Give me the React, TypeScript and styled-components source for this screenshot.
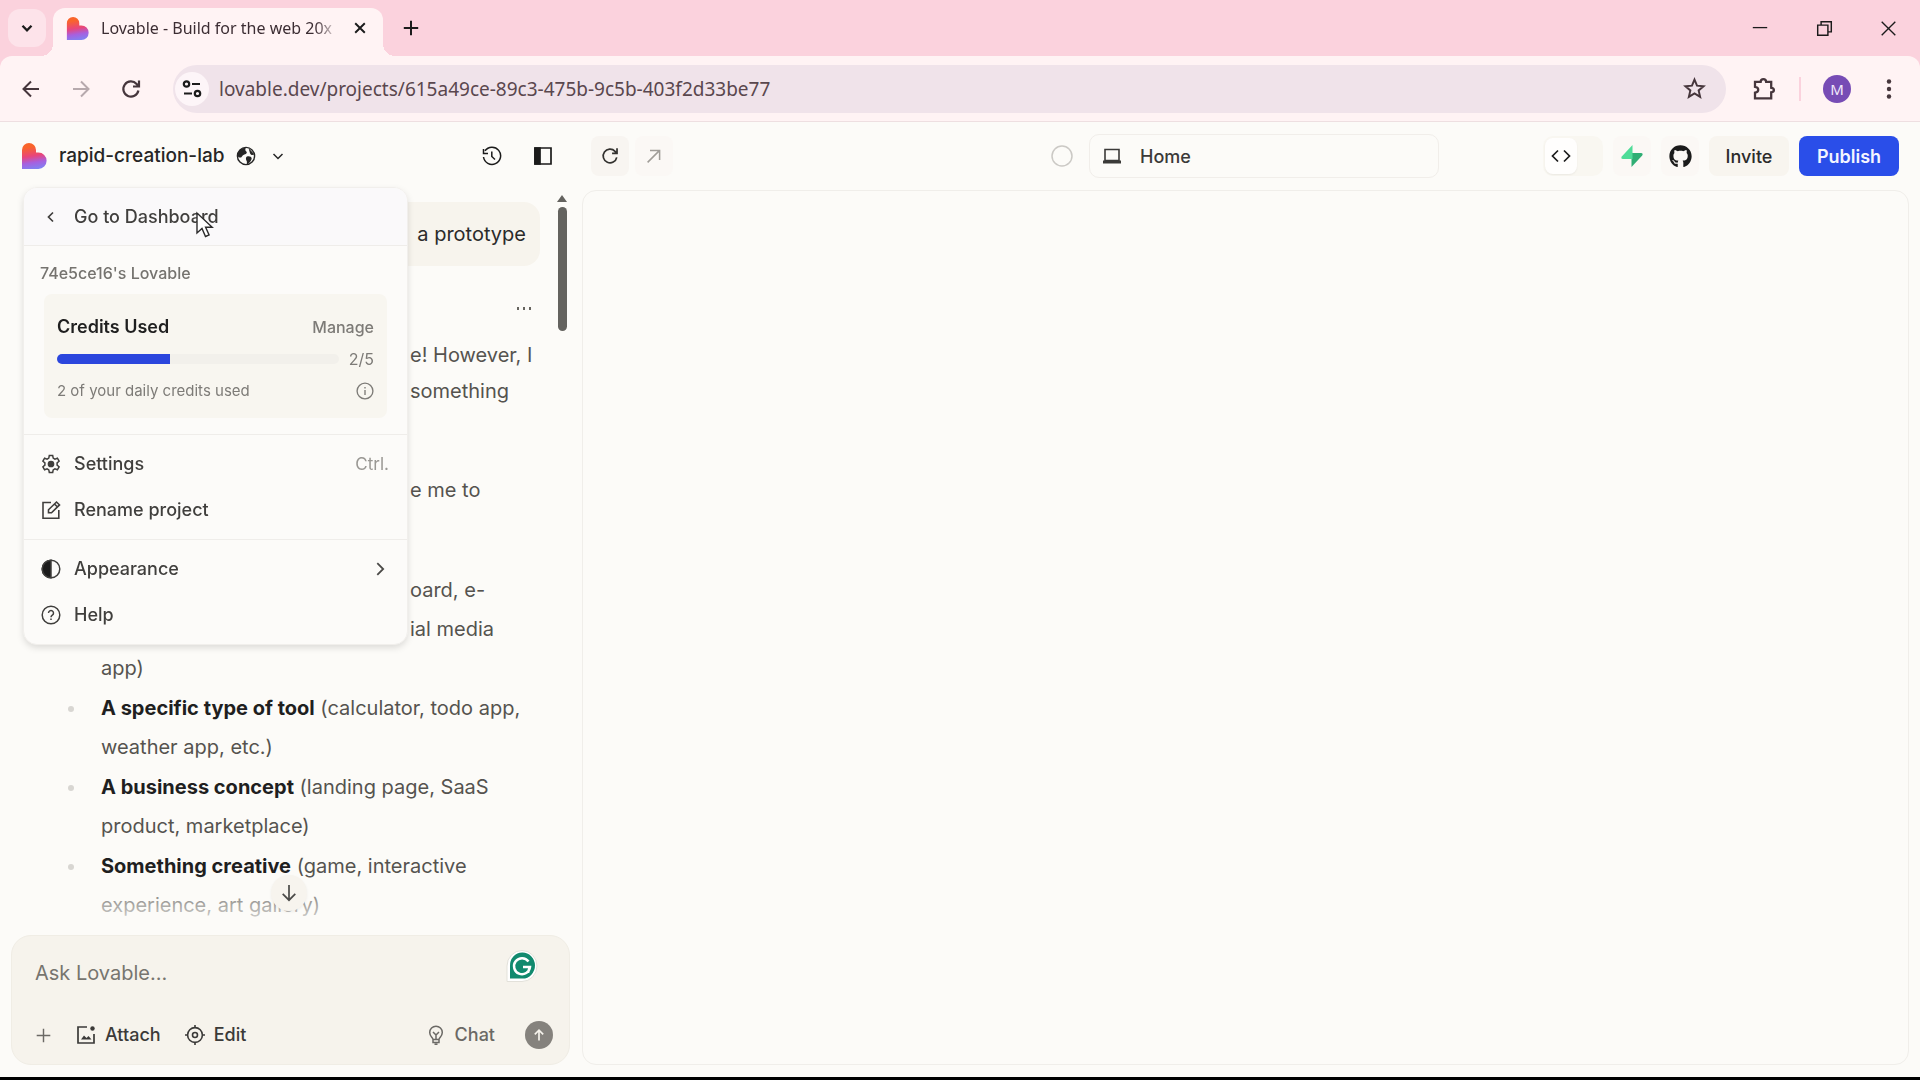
import React from "react";
import styled, { createGlobalStyle } from "styled-components";
import { FaGithub } from "react-icons/fa";

const ui = `Inter, "Liberation Sans", sans-serif`;
const chrome = `"Noto Sans", "Open Sans", sans-serif`;

const Global = createGlobalStyle`
  *, *::before, *::after { box-sizing: border-box; }
  body { margin: 0; background: #fcfbf8; }
  button, input { font: inherit; color: inherit; }
  button { border: 0; padding: 0; background: none; cursor: pointer; }
  svg { display: block; flex: none; }
  p, ul, h2 { margin: 0; padding: 0; }
`;

const Shell = styled.div`
  height: 100vh;
  display: flex;
  flex-direction: column;
  border-bottom: 3px solid #000;
  font-family: ${ui};
  color: #1b1b1b;
`;

/* Browser frame */
const TabStrip = styled.div`
  flex: none;
  height: 56px;
  display: flex;
  align-items: flex-end;
  padding-left: 8px;
  background: #fbd2dd;
  font-family: ${chrome};
`;

const TabSearch = styled.button`
  width: 38px;
  height: 38px;
  margin-bottom: 9px;
  display: grid;
  place-items: center;
  border-radius: 12px;
  background: #fde3ea;
`;

const Tab = styled.div`
  position: relative;
  width: 330px;
  height: 48px;
  margin-left: 7px;
  padding: 0 14px 8px 13px;
  display: flex;
  align-items: center;
  gap: 12px;
  border-radius: 12px 12px 0 0;
  background: #fff3f4;
  &::before, &::after {
    content: "";
    position: absolute;
    bottom: 0;
    width: 12px;
    height: 12px;
  }
  &::before {
    right: 100%;
    background: radial-gradient(circle at 0 0, transparent 12px, #fff3f4 12px);
  }
  &::after {
    left: 100%;
    background: radial-gradient(circle at 100% 0, transparent 12px, #fff3f4 12px);
  }
`;

const TabTitle = styled.span`
  flex: 1;
  white-space: nowrap;
  font-size: 16px;
  line-height: 24px;
  color: #3c2d33;
  mask-image: linear-gradient(to right, #000 90%, transparent);
`;

const TabClose = styled.button`
  width: 18px;
  height: 18px;
  display: grid;
  place-items: center;
`;

const NewTab = styled(TabClose)`
  margin: 0 0 19px 19px;
`;

const WindowControls = styled.div`
  margin-left: auto;
  height: 56px;
  display: flex;
`;

const WindowButton = styled.button`
  width: 64px;
  height: 56px;
  display: grid;
  place-items: center;
`;

const ToolbarFrame = styled.div`
  flex: none;
  background: #fbd2dd;
`;

const Toolbar = styled.div`
  height: 66px;
  display: flex;
  align-items: center;
  padding: 0 15px 0 15px;
  border-radius: 12px 12px 0 0;
  border-bottom: 1px solid #eedfe1;
  background: #fff3f4;
  font-family: ${chrome};
`;

const NavGroup = styled.div`
  display: flex;
  gap: 18px;
  margin-right: 26px;
`;

const NavButton = styled.button<{ $faded?: boolean }>`
  width: 32px;
  height: 32px;
  display: grid;
  place-items: center;
  color: ${(p) => (p.$faded ? "#b7a9ad" : "#46363c")};
`;

const AddressBar = styled.div`
  flex: 1;
  height: 48px;
  display: flex;
  align-items: center;
  gap: 10px;
  padding: 0 16px 0 2px;
  border-radius: 24px;
  background: #f0e3ea;
`;

const SiteInfo = styled.button`
  width: 34px;
  height: 34px;
  display: grid;
  place-items: center;
  border-radius: 50%;
  background: #fdf5f8;
`;

const Address = styled.input`
  flex: 1;
  min-width: 0;
  border: 0;
  padding: 0;
  outline: 0;
  background: none;
  font-size: 19px;
  line-height: 28px;
  color: #5a474e;
`;

const ToolbarEnd = styled.div`
  display: flex;
  align-items: center;
  gap: 19px;
  padding-left: 22px;
`;

const Divider = styled.span`
  width: 2px;
  height: 24px;
  background: #fbd2dd;
`;

const Avatar = styled.button`
  width: 28px;
  height: 28px;
  margin: 0 3px;
  border-radius: 50%;
  background: #774cb5;
  color: #f1e8fa;
  font-size: 15px;
  line-height: 28px;
`;

/* Lovable workspace */
const Workspace = styled.div`
  position: relative;
  flex: 1;
  min-height: 0;
  display: grid;
  grid-template-columns: 582px minmax(0, 1fr);
  background: #fcfbf8;
`;

const ChatColumn = styled.section`
  min-height: 0;
  display: flex;
  flex-direction: column;
  padding: 0 12px 12px 11px;
`;

const ChatHeader = styled.header`
  flex: none;
  height: 68px;
  display: flex;
  align-items: center;
  padding: 0 17px 0 10px;
`;

const ProjectButton = styled.button`
  display: flex;
  align-items: center;
  gap: 12px;
  font-size: 19px;
  line-height: 28px;
  font-weight: 500;
  color: #262626;
`;

const HeaderTools = styled.div`
  display: flex;
  gap: 31px;
  margin-left: auto;
`;

const IconButton = styled.button`
  width: 20px;
  height: 20px;
  display: grid;
  place-items: center;
`;

const ChatBody = styled.div`
  position: relative;
  flex: 1;
  min-height: 0;
  display: flex;
  overflow: hidden;
`;

const Messages = styled.div`
  flex: 1;
  min-width: 0;
  padding-top: 12px;
  font-size: 20px;
  color: #55534f;
`;

const Bubble = styled.div`
  width: 340px;
  height: 64px;
  margin-left: auto;
  padding: 14px;
  text-align: right;
  line-height: 36px;
  border-radius: 16px;
  background: #f7f4ed;
  color: #2b2b2b;
`;

const MessageMore = styled.button`
  display: block;
  margin: 32px 6px 19px auto;
  line-height: 20px;
`;

const Paragraph = styled.p`
  margin-bottom: 63px;
  padding-left: 399px;
  line-height: 36px;
  white-space: nowrap;
`;

const IdeaList = styled.ul`
  display: flex;
  flex-direction: column;
  gap: 1px;
  padding-left: 90px;
  list-style: none;
`;

const Idea = styled.li`
  position: relative;
  line-height: 39px;
  white-space: nowrap;
  &::before {
    content: "";
    position: absolute;
    left: -33px;
    top: 17px;
    width: 6px;
    height: 6px;
    border-radius: 50%;
    background: #d8d6d2;
  }
  strong { font-weight: 700; color: #1f1f1f; }
`;

const Tail = styled.span`
  display: block;
  padding-left: 309px;
`;

const BottomFade = styled.div`
  position: absolute;
  left: 0;
  right: 24px;
  bottom: 0;
  height: 60px;
  background: linear-gradient(to bottom, rgba(252, 251, 248, 0), #fcfbf8);
`;

const ScrollDown = styled.button`
  position: absolute;
  left: 260px;
  bottom: 24px;
  width: 36px;
  height: 36px;
  display: grid;
  place-items: center;
  border-radius: 50%;
  background: #f7f4ee;
  box-shadow: 0 1px 3px rgba(0, 0, 0, 0.06);
  color: #4b4a48;
`;

const ScrollTrack = styled.div`
  flex: none;
  width: 16px;
  margin-left: 14px;
  display: flex;
  flex-direction: column;
  align-items: center;
  gap: 5px;
  padding-top: 5px;
`;

const ScrollThumb = styled.div`
  width: 9px;
  height: 124px;
  border-radius: 5px;
  background: #64635f;
`;

const Composer = styled.form`
  flex: none;
  display: flex;
  flex-direction: column;
  height: 130px;
  padding: 13px 16px 15px 23px;
  border: 1px solid #f0ede5;
  border-radius: 20px;
  background: #f6f3ec;
`;

const PromptRow = styled.div`
  display: flex;
  align-items: flex-start;
  padding-right: 15px;
  height: 48px;
`;

const Prompt = styled.input`
  flex: 1;
  min-width: 0;
  height: 48px;
  border: 0;
  padding: 0;
  outline: 0;
  background: none;
  font-size: 20px;
  line-height: 28px;
  &::placeholder { color: #77756f; opacity: 1; }
`;

const ComposerTools = styled.div`
  display: flex;
  align-items: center;
  gap: 24px;
  margin-top: auto;
`;

const ComposerButton = styled.button<{ $muted?: boolean; $push?: boolean }>`
  display: flex;
  align-items: center;
  gap: 9px;
  margin-left: ${(p) => (p.$push ? "auto" : "0")};
  font-size: 18px;
  line-height: 28px;
  font-weight: 500;
  color: ${(p) => (p.$muted ? "#6b6965" : "#3b3a38")};
`;

const Send = styled.button`
  width: 28px;
  height: 28px;
  margin-left: 6px;
  display: grid;
  place-items: center;
  border-radius: 50%;
  background: #85827d;
  color: #f6f3ec;
`;

const PreviewColumn = styled.section`
  display: flex;
  flex-direction: column;
  padding: 0 11px 12px 0;
`;

const PreviewHeader = styled.header`
  flex: none;
  height: 68px;
  display: grid;
  grid-template-columns: 1fr auto 1fr;
  align-items: center;
  padding: 0 10px 0 9px;
`;

const HeaderGroup = styled.div<{ $end?: boolean }>`
  display: flex;
  align-items: center;
  gap: ${(p) => (p.$end ? "10px" : "6px")};
  justify-content: ${(p) => (p.$end ? "flex-end" : "flex-start")};
`;

const Tile = styled.button<{ $faint?: boolean }>`
  width: 38px;
  height: 40px;
  display: grid;
  place-items: center;
  border-radius: 8px;
  background: ${(p) => (p.$faint ? "#fbf8f5" : "#f8f5f1")};
  color: ${(p) => (p.$faint ? "#a09d98" : "#33322f")};
`;

const RouteGroup = styled.div`
  display: flex;
  align-items: center;
  gap: 16px;
`;

const RouteBox = styled.button`
  width: 350px;
  height: 44px;
  display: flex;
  align-items: center;
  gap: 18px;
  padding: 0 12px;
  border: 1px solid #f1eeea;
  border-radius: 10px;
  font-size: 18px;
  font-weight: 500;
  color: #3b3a38;
`;

const ViewSwitch = styled.div`
  width: 60px;
  height: 40px;
  padding: 2px;
  border-radius: 10px;
  background: #f9f7f1;
`;

const ViewOption = styled.button`
  width: 32px;
  height: 36px;
  display: grid;
  place-items: center;
  border-radius: 8px;
  background: #fffefd;
  box-shadow: 0 1px 2px rgba(0, 0, 0, 0.06);
`;

const TextButton = styled.button<{ $primary?: boolean }>`
  height: 40px;
  width: ${(p) => (p.$primary ? "100px" : "80px")};
  border-radius: 8px;
  font-size: 18px;
  font-weight: ${(p) => (p.$primary ? 600 : 500)};
  background: ${(p) => (p.$primary ? "#2a4ee9" : "#f8f5ef")};
  color: ${(p) => (p.$primary ? "#f3f5ff" : "#2b2b2b")};
`;

const PreviewFrame = styled.div`
  flex: 1;
  border: 1px solid #f0eeea;
  border-radius: 14px;
  background: #fcfbf8;
`;

/* Project menu */
const Menu = styled.nav`
  position: absolute;
  left: 23px;
  top: 65px;
  width: 385px;
  overflow: hidden;
  border-radius: 14px;
  background: #fcfbf9;
  border: 1px solid #f1efec;
  filter: drop-shadow(0 3px 3px rgba(0, 0, 0, 0.12));
`;

const MenuGroup = styled.div`
  padding: 6px 0;
  border-top: 1px solid #efedea;
`;

const MenuItem = styled.button<{ $active?: boolean }>`
  width: 100%;
  height: ${(p) => (p.$active ? 57 : 46)}px;
  display: flex;
  align-items: center;
  gap: 13px;
  padding: 0 18px 0 17px;
  font-size: 18px;
  line-height: 26px;
  text-align: left;
  font-weight: 500;
  background: ${(p) => (p.$active ? "#faf9fa" : "none")};
  color: #403f3d;
`;

const ItemEnd = styled.span`
  margin-left: auto;
  font-size: 17px;
  font-weight: 400;
  color: #9a9894;
`;

const Credits = styled.div`
  padding: 15px 20px 16px 20px;
  border-top: 1px solid #efedea;
`;

const Owner = styled.h2`
  margin-left: -4px;
  font-size: 16px;
  line-height: 24px;
  font-weight: 500;
  color: #75736f;
`;

const CreditCard = styled.div`
  display: flex;
  flex-direction: column;
  gap: 6px;
  margin-top: 9px;
  padding: 20px 13px 14px;
  border-radius: 8px;
  background: #f8f6f0;
`;

const CreditRow = styled.div`
  display: flex;
  align-items: center;
  justify-content: space-between;
  gap: 10px;
  font-size: 16px;
  line-height: 26px;
  color: #7d7b77;
  strong { font-size: 18px; font-weight: 600; color: #1f1f1f; }
  button { font-weight: 500; }
  small { font-size: 15px; }
`;

const Meter = styled.div`
  flex: 1;
  height: 10px;
  overflow: hidden;
  border-radius: 5px;
  background: #f2f0eb;
`;

const MeterFill = styled.div`
  height: 100%;
  background: #2b46dd;
`;

const Pointer = styled.svg`
  position: absolute;
  left: 195px;
  top: 89px;
`;

function Stroke(props: {
  size?: number;
  width?: number;
  children: React.ReactNode;
}) {
  return (
    <svg
      width={props.size ?? 20}
      height={props.size ?? 20}
      viewBox="0 0 20 20"
      fill="none"
      stroke="currentColor"
      strokeWidth={props.width ?? 1.6}
      aria-hidden="true"
    >
      {props.children}
    </svg>
  );
}

function Logo({ size, id }: { size: number; id: string }) {
  return (
    <svg width={size} height={size} viewBox="0 0 24 26" aria-hidden="true">
      <defs>
        <linearGradient id={id} x1="0.35" y1="0" x2="0.5" y2="1">
          <stop offset="0.15" stopColor="#f9642b" />
          <stop offset="0.5" stopColor="#e8457c" />
          <stop offset="0.75" stopColor="#a760df" />
          <stop offset="1" stopColor="#8180f2" />
        </linearGradient>
      </defs>
      <path
        d="M0 7a7 7 0 0 1 14 0v2.6h2.4a8 8 0 0 1 0 16.4H0Z"
        fill={`url(#${id})`}
      />
    </svg>
  );
}

const ideas = [
  { title: "A specific type of tool", lines: ["(calculator, todo app,", "weather app, etc.)"] },
  { title: "A business concept", lines: ["(landing page, SaaS", "product, marketplace)"] },
  { title: "Something creative", lines: ["(game, interactive", "experience, art gallery)"] },
];

function BrowserFrame() {
  return (
    <>
      <TabStrip>
        <TabSearch aria-label="Search tabs">
          <Stroke size={18} width={2.6}><path d="m5 7.500 5 5 5-5" /></Stroke>
        </TabSearch>
        <Tab>
          <Logo size={23} id="tab-logo" />
          <TabTitle>Lovable - Build for the web 20x</TabTitle>
          <TabClose aria-label="Close tab">
            <Stroke size={16} width={2.4}><path d="m4 4 12 12M16 4 4 16" /></Stroke>
          </TabClose>
        </Tab>
        <NewTab aria-label="New tab">
          <Stroke size={18} width={2.2}><path d="M10 2v16M2 10h16" /></Stroke>
        </NewTab>
        <WindowControls>
          <WindowButton aria-label="Minimize">
            <Stroke size={16}><path d="M1 9.500h18" /></Stroke>
          </WindowButton>
          <WindowButton aria-label="Restore">
            <Stroke size={17} width={1.7}>
              <path d="M2 6h12v12H2zM6 6V2h12v12h-4" />
            </Stroke>
          </WindowButton>
          <WindowButton aria-label="Close window">
            <Stroke size={17} width={1.6}><path d="m2 2 16 16M18 2 2 18" /></Stroke>
          </WindowButton>
        </WindowControls>
      </TabStrip>
      <ToolbarFrame>
        <Toolbar>
          <NavGroup>
            <NavButton aria-label="Back">
              <Stroke width={2}><path d="M18 10H3M10 2.500 2.500 10l7.500 7.500" /></Stroke>
            </NavButton>
            <NavButton aria-label="Forward" $faded>
              <Stroke width={2}><path d="M2 10h15M10 2.500l7.500 7.500-7.500 7.500" /></Stroke>
            </NavButton>
            <NavButton aria-label="Reload">
              <Stroke width={2.2}>
                <path d="M17.400 11.500A7.600 7.600 0 1 1 15.600 4.900l1.900 2.100M18 1.500V7.500h-6" />
              </Stroke>
            </NavButton>
          </NavGroup>
          <AddressBar>
            <SiteInfo aria-label="View site information">
              <Stroke width={2.200}>
                <circle cx="4.500" cy="5" r="2.700" /><path d="M10 5h8M2 14.500h8" />
                <circle cx="15.500" cy="14.500" r="2.700" />
              </Stroke>
            </SiteInfo>
            <Address
              aria-label="Address"
              defaultValue="lovable.dev/projects/615a49ce-89c3-475b-9c5b-403f2d33be77"
            />
            <NavButton aria-label="Bookmark this tab">
              <Stroke size={23} width={1.7}>
                <path d="m10 2.200 2.200 5.300 5.700.5-4.300 3.700 1.300 5.600-4.900-3-4.900 3 1.300-5.600-4.300-3.700 5.700-.5Z" />
              </Stroke>
            </NavButton>
          </AddressBar>
          <ToolbarEnd>
            <NavButton aria-label="Extensions">
              <Stroke size={24} width={1.900}>
                <path d="M2.500 4h4.700c.2-3 4.400-3 4.600 0H16v5c3 .2 3 3.600 0 3.800v5H2.500V13c3.600-.6 3.600-4.300 0-4.800Z" />
              </Stroke>
            </NavButton>
            <Divider />
            <Avatar aria-label="Profile">M</Avatar>
            <NavButton aria-label="Browser menu">
              <svg width="20" height="20" viewBox="0 0 20 20" fill="currentColor">
                <circle cx="10" cy="2.500" r="2.200" /><circle cx="10" cy="10" r="2.200" />
                <circle cx="10" cy="17.500" r="2.200" />
              </svg>
            </NavButton>
          </ToolbarEnd>
        </Toolbar>
      </ToolbarFrame>
    </>
  );
}

function Chat() {
  return (
    <ChatColumn>
      <ChatHeader>
        <ProjectButton aria-haspopup="menu" aria-expanded="true">
          <Logo size={26} id="app-logo" />
          rapid-creation-lab
          <Stroke width={1.4}>
            <circle cx="10" cy="10" r="8.600" />
            <path
              d="M10 1.500c-1 2-1 3 .5 4.200 1 .8-.4 2.300-1.500 2.600-1.600.4-2.600 1.500-3.600 2.900-.7 1-3.800-.2-3.900-1.200 0-5 3.900-8.400 8.500-8.500ZM12.500 2l5.800 6.200c-1.800 1.500-3.600.8-4.300-1ZM11 10.500c2-.7 4.600 0 4.700 1.900-.1 1.900-2.300 4.800-4.600 6-.7-1.500.4-2.500-.7-4-.8-1.200-.6-3.500.6-3.900Z"
              fill="currentColor"
              stroke="none"
            />
          </Stroke>
          <Stroke width={1.500}><path d="m5.500 8 4.500 4.500L14.500 8" /></Stroke>
        </ProjectButton>
        <HeaderTools>
          <IconButton aria-label="History">
            <Stroke width={1.500}>
              <path d="M3 4.800A8.600 8.600 0 1 1 1.500 11M1.500 3v4.500H6M9.800 5.500v5l3.200 3" />
            </Stroke>
          </IconButton>
          <IconButton aria-label="Toggle sidebar">
            <Stroke width={1.700}>
              <path d="M2 2h16v16H2z" /><path d="M2 2h5v16H2z" fill="currentColor" />
            </Stroke>
          </IconButton>
        </HeaderTools>
      </ChatHeader>
      <ChatBody>
        <Messages>
          <Bubble>a prototype</Bubble>
          <MessageMore aria-label="Message options">
            <svg width="18" height="20" viewBox="0 0 18 20" fill="#66645f">
              <rect x="1" y="9" width="2" height="3" /><rect x="7" y="9" width="2" height="3" />
              <rect x="13" y="9" width="2" height="3" />
            </svg>
          </MessageMore>
          <Paragraph>e! However, I<br />something</Paragraph>
          <Paragraph>e me to</Paragraph>
          <IdeaList>
            <Idea><Tail>oard, e-</Tail><Tail>ial media</Tail>app)</Idea>
            {ideas.map((idea) => (
              <Idea key={idea.title}>
                <strong>{idea.title}</strong> {idea.lines[0]}<br />{idea.lines[1]}
              </Idea>
            ))}
          </IdeaList>
        </Messages>
        <ScrollTrack>
          <svg width="10" height="7" viewBox="0 0 10 7"><path d="M5 0l5 7H0z" fill="#64635f" /></svg>
          <ScrollThumb />
        </ScrollTrack>
        <BottomFade />
        <ScrollDown aria-label="Scroll to bottom">
          <Stroke size={18} width={1.900}><path d="M10 1v17M3 11l7 7 7-7" /></Stroke>
        </ScrollDown>
      </ChatBody>
      <Composer onSubmit={(e) => e.preventDefault()}>
        <PromptRow>
          <Prompt aria-label="Message" placeholder="Ask Lovable..." />
          <svg width="32" height="34" viewBox="0 0 32 34" aria-hidden="true">
            <path d="M1 17a15 15.500 0 1 1 15 15.500H1Z" fill="#fff" stroke="#e3e1da" />
            <path d="M4 17a12.500 13 0 1 1 12.500 12.500H4Z" fill="#118a6e" />
            <path d="M22.500 12.500A8 8 0 1 0 24 18h-7M24 17.500l-2 6" fill="none" stroke="#fff" strokeWidth="2.500" />
          </svg>
        </PromptRow>
        <ComposerTools>
          <ComposerButton type="button" aria-label="Add" $muted>
            <Stroke size={17} width={1.700}><path d="M10 2v16M2 10h16" /></Stroke>
          </ComposerButton>
          <ComposerButton type="button">
            <Stroke width={1.700}>
              <path d="M11 2H2v16h16V9" />
              <path d="m5 14.500 3-4 2.500 2.500 2-2 3 3.500Z" fill="currentColor" stroke="none" />
              <circle cx="16.500" cy="3.500" r="2.200" fill="currentColor" stroke="none" />
            </Stroke>
            Attach
          </ComposerButton>
          <ComposerButton type="button">
            <Stroke width={1.600}>
              <circle cx="10" cy="10" r="7.400" /><circle cx="10" cy="10" r="2.500" />
              <path d="M10 0v3M10 17v3M0 10h3M17 10h3" />
            </Stroke>
            Edit
          </ComposerButton>
          <ComposerButton type="button" $muted $push>
            <Stroke width={1.500}>
              <path d="M7 14.500c0-2-3.300-3.200-3.300-7a6.300 6.300 0 0 1 12.600 0c0 3.800-3.300 5-3.300 7ZM7 15v2.500h6V15M8.500 19.300h3M7 7l3 3 3-3M10 10v4" />
            </Stroke>
            Chat
          </ComposerButton>
          <Send aria-label="Send">
            <Stroke size={14} width={2.400}><path d="M10 18V3M4 9l6-6 6 6" /></Stroke>
          </Send>
        </ComposerTools>
      </Composer>
    </ChatColumn>
  );
}

function Preview() {
  return (
    <PreviewColumn>
      <PreviewHeader>
        <HeaderGroup>
          <Tile aria-label="Refresh preview">
            <Stroke size={18} width={1.900}>
              <path d="M17.500 11.500A7.600 7.600 0 1 1 15.600 4.800L17.500 7M17.800 1.500V7h-5.500" />
            </Stroke>
          </Tile>
          <Tile aria-label="Open in new tab" $faint>
            <Stroke size={16} width={1.900}><path d="M2 18 17 3M5 3h12v12" /></Stroke>
          </Tile>
        </HeaderGroup>
        <RouteGroup>
          <svg width="22" height="22" viewBox="0 0 22 22" fill="none" stroke="#cbc9c5" strokeWidth="1.500">
            <circle cx="11" cy="11" r="10" />
          </svg>
          <RouteBox>
            <Stroke width={1.600}>
              <path d="M3 3.500h14v11H3z" /><path d="M1 16h18" strokeWidth="3" />
            </Stroke>
            Home
          </RouteBox>
        </RouteGroup>
        <HeaderGroup $end>
          <ViewSwitch>
            <ViewOption aria-label="Code view">
              <Stroke width={1.700}><path d="M7 4.500 1.500 10 7 15.500M13 4.500l5.500 5.500-5.500 5.500" /></Stroke>
            </ViewOption>
          </ViewSwitch>
          <Tile aria-label="Supabase" $faint>
            <svg width="22" height="22" viewBox="0 0 22 22" aria-hidden="true">
              <path d="M10.500 22V8H20c2 0 2 1.500 1 2.800Z" fill="#2fae74" />
              <path d="M11.500 0v14H2C0 14 0 12.500 1 11.200Z" fill="#4fdc98" />
            </svg>
          </Tile>
          <Tile aria-label="GitHub" $faint><FaGithub size={23} color="#1b1b1b" /></Tile>
          <TextButton>Invite</TextButton>
          <TextButton $primary>Publish</TextButton>
        </HeaderGroup>
      </PreviewHeader>
      <PreviewFrame />
    </PreviewColumn>
  );
}

function ProjectMenu() {
  const used = 2;
  const total = 5;
  return (
    <Menu aria-label="Project menu">
      <MenuItem $active>
        <Stroke width={1.700}><path d="m12 5.500-4.500 4.500L12 14.500" /></Stroke>
        Go to Dashboard
      </MenuItem>
      <Credits>
        <Owner>74e5ce16's Lovable</Owner>
        <CreditCard>
          <CreditRow><strong>Credits Used</strong><button>Manage</button></CreditRow>
          <CreditRow>
            <Meter><MeterFill style={{ width: `${(used / total) * 100}%` }} /></Meter>
            {used}/{total}
          </CreditRow>
          <CreditRow>
            <small>2 of your daily credits used</small>
            <Stroke size={18} width={1.500}>
              <circle cx="10" cy="10" r="8.800" /><path d="M10 9v5.500M10 5.500v1.800" />
            </Stroke>
          </CreditRow>
        </CreditCard>
      </Credits>
      <MenuGroup>
        <MenuItem>
          <Stroke width={1.500}>
            <path d="M8.300 1.500h3.400l.5 2.600 1.700 1 2.500-.9 1.700 3-2 1.700v2.200l2 1.700-1.700 3-2.500-.9-1.700 1-.5 2.600H8.300l-.5-2.600-1.700-1-2.500.9-1.700-3 2-1.700V8.900l-2-1.700 1.700-3 2.500.9 1.700-1Z" />
            <circle cx="10" cy="10" r="2.600" fill="currentColor" />
          </Stroke>
          Settings
          <ItemEnd>Ctrl.</ItemEnd>
        </MenuItem>
        <MenuItem>
          <Stroke width={1.600}>
            <path d="M10 2.500H2v15.700h15.800V10" />
            <path d="M7.500 12.700V9.800L15.500 2l3 2.900-8 7.800ZM13.500 4l3 3" />
          </Stroke>
          Rename project
        </MenuItem>
      </MenuGroup>
      <MenuGroup>
        <MenuItem>
          <Stroke width={1.500}>
            <circle cx="10" cy="10" r="8.800" />
            <path d="M10 1.200a8.800 8.800 0 0 0 0 17.600Z" fill="#1b1b1b" />
          </Stroke>
          Appearance
          <ItemEnd>
            <Stroke size={18} width={2}><path d="m7 3.500 6.500 6.500L7 16.500" stroke="#4b4a48" /></Stroke>
          </ItemEnd>
        </MenuItem>
        <MenuItem>
          <Stroke width={1.500}>
            <circle cx="10" cy="10" r="8.800" />
            <path d="M7.500 8a2.500 2.500 0 1 1 3.800 2.200c-1 .6-1.300 1-1.300 2.100M10 13.500v1.600" />
          </Stroke>
          Help
        </MenuItem>
      </MenuGroup>
    </Menu>
  );
}

export default function App() {
  return (
    <>
      <Global />
      <Shell>
        <BrowserFrame />
        <Workspace>
          <Chat />
          <Preview />
          <ProjectMenu />
          <Pointer width="20" height="28" viewBox="0 0 20 28" aria-hidden="true">
            <path d="M2 2v20l5-4.500 3.500 8 3.600-1.600-3.500-7.700h6.600Z" fill="#fff" stroke="#2b2b2b" strokeWidth="1.400" />
          </Pointer>
        </Workspace>
      </Shell>
    </>
  );
}
